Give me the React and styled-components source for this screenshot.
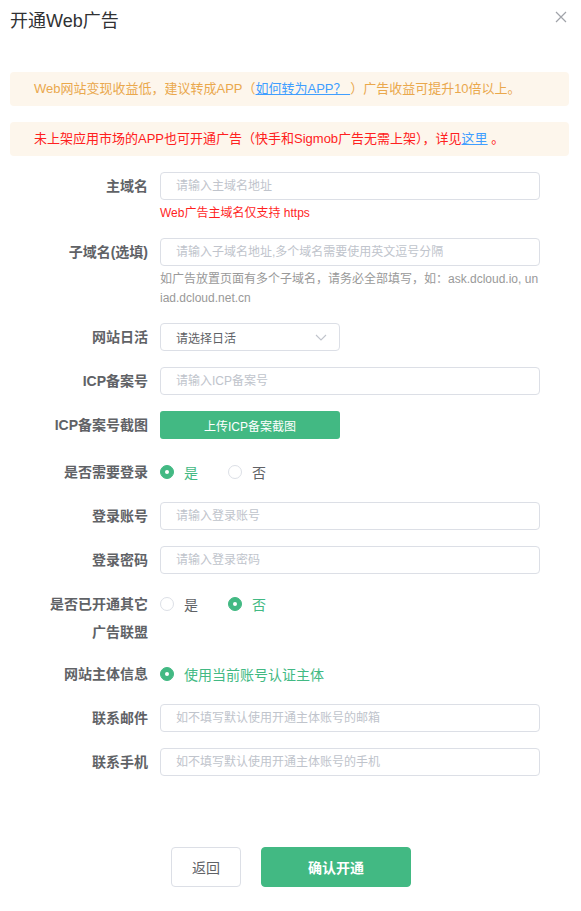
import React from 'react';
import styled, { createGlobalStyle } from 'styled-components';

const green = '#42b983';

const GlobalStyle = createGlobalStyle`
body{
    margin:0;
    background:#fff;
    font-family:"Liberation Sans", "Noto Sans CJK SC", sans-serif;
}
*{
    box-sizing:border-box;
}
`

const Page = styled.div`
width:581px;
min-height:911px;
background:#fff;
`

const Header = styled.div`
display:flex;
justify-content:space-between;
align-items:flex-start;
height:40px;
padding:9px 14px 0 10px;
`

const Title = styled.h2`
margin:0;
font-size:18px;
line-height:24px;
font-weight:normal;
color:#303133;
`

const Close = styled.button`
border:0;
background:none;
padding:0;
margin-top:2px;
width:12px;
height:12px;
cursor:pointer;
display:flex;
`

const Notices = styled.div`
display:flex;
flex-direction:column;
gap:16px;
margin:32px 12px 0 10px;
`

const Notice = styled.div`
background:#fdf6ec;
border-radius:4px;
padding:8px 24px;
font-size:13px;
line-height:18px;
color:${props => props.$tone === 'red' ? '#ff2020' : '#eaa84c'};
white-space:nowrap;
a{
    color:#409eff;
    text-decoration:underline;
}
`

const Form = styled.form`
margin-top:16px;
display:flex;
flex-direction:column;
`

const Row = styled.div`
display:grid;
grid-template-columns:160px 380px;
margin-bottom:${props => props.$gap ?? 16}px;
`

const Label = styled.label`
text-align:right;
padding-right:12px;
font-size:14px;
font-weight:bold;
line-height:28px;
color:#606266;
`

const Field = styled.div`
display:flex;
flex-direction:column;
`

const Input = styled.input`
width:100%;
height:28px;
border:1px solid #dcdfe6;
border-radius:4px;
padding:0 15px;
font-family:inherit;
font-size:12px;
color:#606266;
outline:none;
&::placeholder{
    color:#c0c4cc;
}
`

const Hint = styled.div`
margin-top:4px;
font-size:12px;
line-height:19px;
word-break:break-all;
color:${props => props.$error ? '#ff1f1f' : '#999'};
`

const Select = styled.div`
width:180px;
height:28px;
border:1px solid #dcdfe6;
border-radius:4px;
padding:0 12px 0 15px;
display:flex;
align-items:center;
justify-content:space-between;
font-size:12px;
color:#606266;
cursor:pointer;
`

const Upload = styled.button`
width:180px;
height:28px;
border:0;
border-radius:3px;
background:${green};
color:#fff;
font-family:inherit;
font-size:12px;
cursor:pointer;
`

const RadioGroup = styled.div`
display:flex;
align-items:center;
height:28px;
gap:30px;
`

const RadioItem = styled.label`
display:flex;
align-items:center;
gap:10px;
font-size:14px;
color:${props => props.$checked ? green : '#606266'};
cursor:pointer;
`

const RadioDot = styled.span`
width:14px;
height:14px;
border-radius:50%;
border:1px solid ${props => props.$checked ? green : '#dcdfe6'};
background:${props => props.$checked ? green : '#fff'};
display:flex;
align-items:center;
justify-content:center;
&:after{
    content:'';
    width:4px;
    height:4px;
    border-radius:50%;
    background:#fff;
}
`

const Actions = styled.div`
display:flex;
justify-content:center;
gap:20px;
margin-top:55px;
padding-left:1px;
`

const Button = styled.button`
width:${props => props.$primary ? 150 : 70}px;
height:40px;
border-radius:4px;
border:1px solid ${props => props.$primary ? green : '#dcdfe6'};
background:${props => props.$primary ? green : '#fff'};
color:${props => props.$primary ? '#fff' : '#606266'};
font-family:inherit;
font-size:14px;
font-weight:${props => props.$primary ? 'bold' : 'normal'};
cursor:pointer;
`

const Radio = ({ checked, children }) => (
    <RadioItem $checked={checked}>
        <RadioDot $checked={checked} />
        {children}
    </RadioItem>
)

const TextRow = ({ label, placeholder }) => (
    <Row>
        <Label>{label}</Label>
        <Input placeholder={placeholder} />
    </Row>
)

export default function App() {
    return (
        <Page>
            <GlobalStyle />
            <Header>
                <Title>开通Web广告</Title>
                <Close aria-label="close">
                    <svg width="12" height="12" viewBox="0 0 12 12">
                        <path d="M1 1 L11 11 M11 1 L1 11" stroke="#a0a3a9" strokeWidth="1.2" fill="none" />
                    </svg>
                </Close>
            </Header>
            <Notices>
                <Notice>
                    Web网站变现收益低，建议转成APP（<a href="#">如何转为APP？ </a>）广告收益可提升10倍以上。
                </Notice>
                <Notice $tone="red">
                    未上架应用市场的APP也可开通广告（快手和Sigmob广告无需上架），详见<a href="#">这里</a> 。
                </Notice>
            </Notices>
            <Form>
                <Row $gap={15}>
                    <Label>主域名</Label>
                    <Field>
                        <Input placeholder="请输入主域名地址" />
                        <Hint $error>Web广告主域名仅支持 https</Hint>
                    </Field>
                </Row>
                <Row $gap={15}>
                    <Label>子域名(选填)</Label>
                    <Field>
                        <Input placeholder="请输入子域名地址,多个域名需要使用英文逗号分隔" />
                        <Hint>如广告放置页面有多个子域名，请务必全部填写，如：ask.dcloud.io, uniad.dcloud.net.cn</Hint>
                    </Field>
                </Row>
                <Row>
                    <Label>网站日活</Label>
                    <Select>
                        请选择日活
                        <svg width="12" height="7" viewBox="0 0 12 7">
                            <path d="M1 1 L6 6 L11 1" stroke="#c0c4cc" strokeWidth="1.1" fill="none" />
                        </svg>
                    </Select>
                </Row>
                <TextRow label="ICP备案号" placeholder="请输入ICP备案号" />
                <Row $gap={19}>
                    <Label>ICP备案号截图</Label>
                    <div><Upload type="button">上传ICP备案截图</Upload></div>
                </Row>
                <Row>
                    <Label>是否需要登录</Label>
                    <RadioGroup>
                        <Radio checked>是</Radio>
                        <Radio>否</Radio>
                    </RadioGroup>
                </Row>
                <TextRow label="登录账号" placeholder="请输入登录账号" />
                <TextRow label="登录密码" placeholder="请输入登录密码" />
                <Row $gap={14}>
                    <Label>是否已开通其它<br />广告联盟</Label>
                    <RadioGroup>
                        <Radio>是</Radio>
                        <Radio checked>否</Radio>
                    </RadioGroup>
                </Row>
                <Row>
                    <Label>网站主体信息</Label>
                    <RadioGroup>
                        <Radio checked>使用当前账号认证主体</Radio>
                    </RadioGroup>
                </Row>
                <TextRow label="联系邮件" placeholder="如不填写默认使用开通主体账号的邮箱" />
                <TextRow label="联系手机" placeholder="如不填写默认使用开通主体账号的手机" />
                <Actions>
                    <Button type="button">返回</Button>
                    <Button type="button" $primary>确认开通</Button>
                </Actions>
            </Form>
        </Page>
    )
}
